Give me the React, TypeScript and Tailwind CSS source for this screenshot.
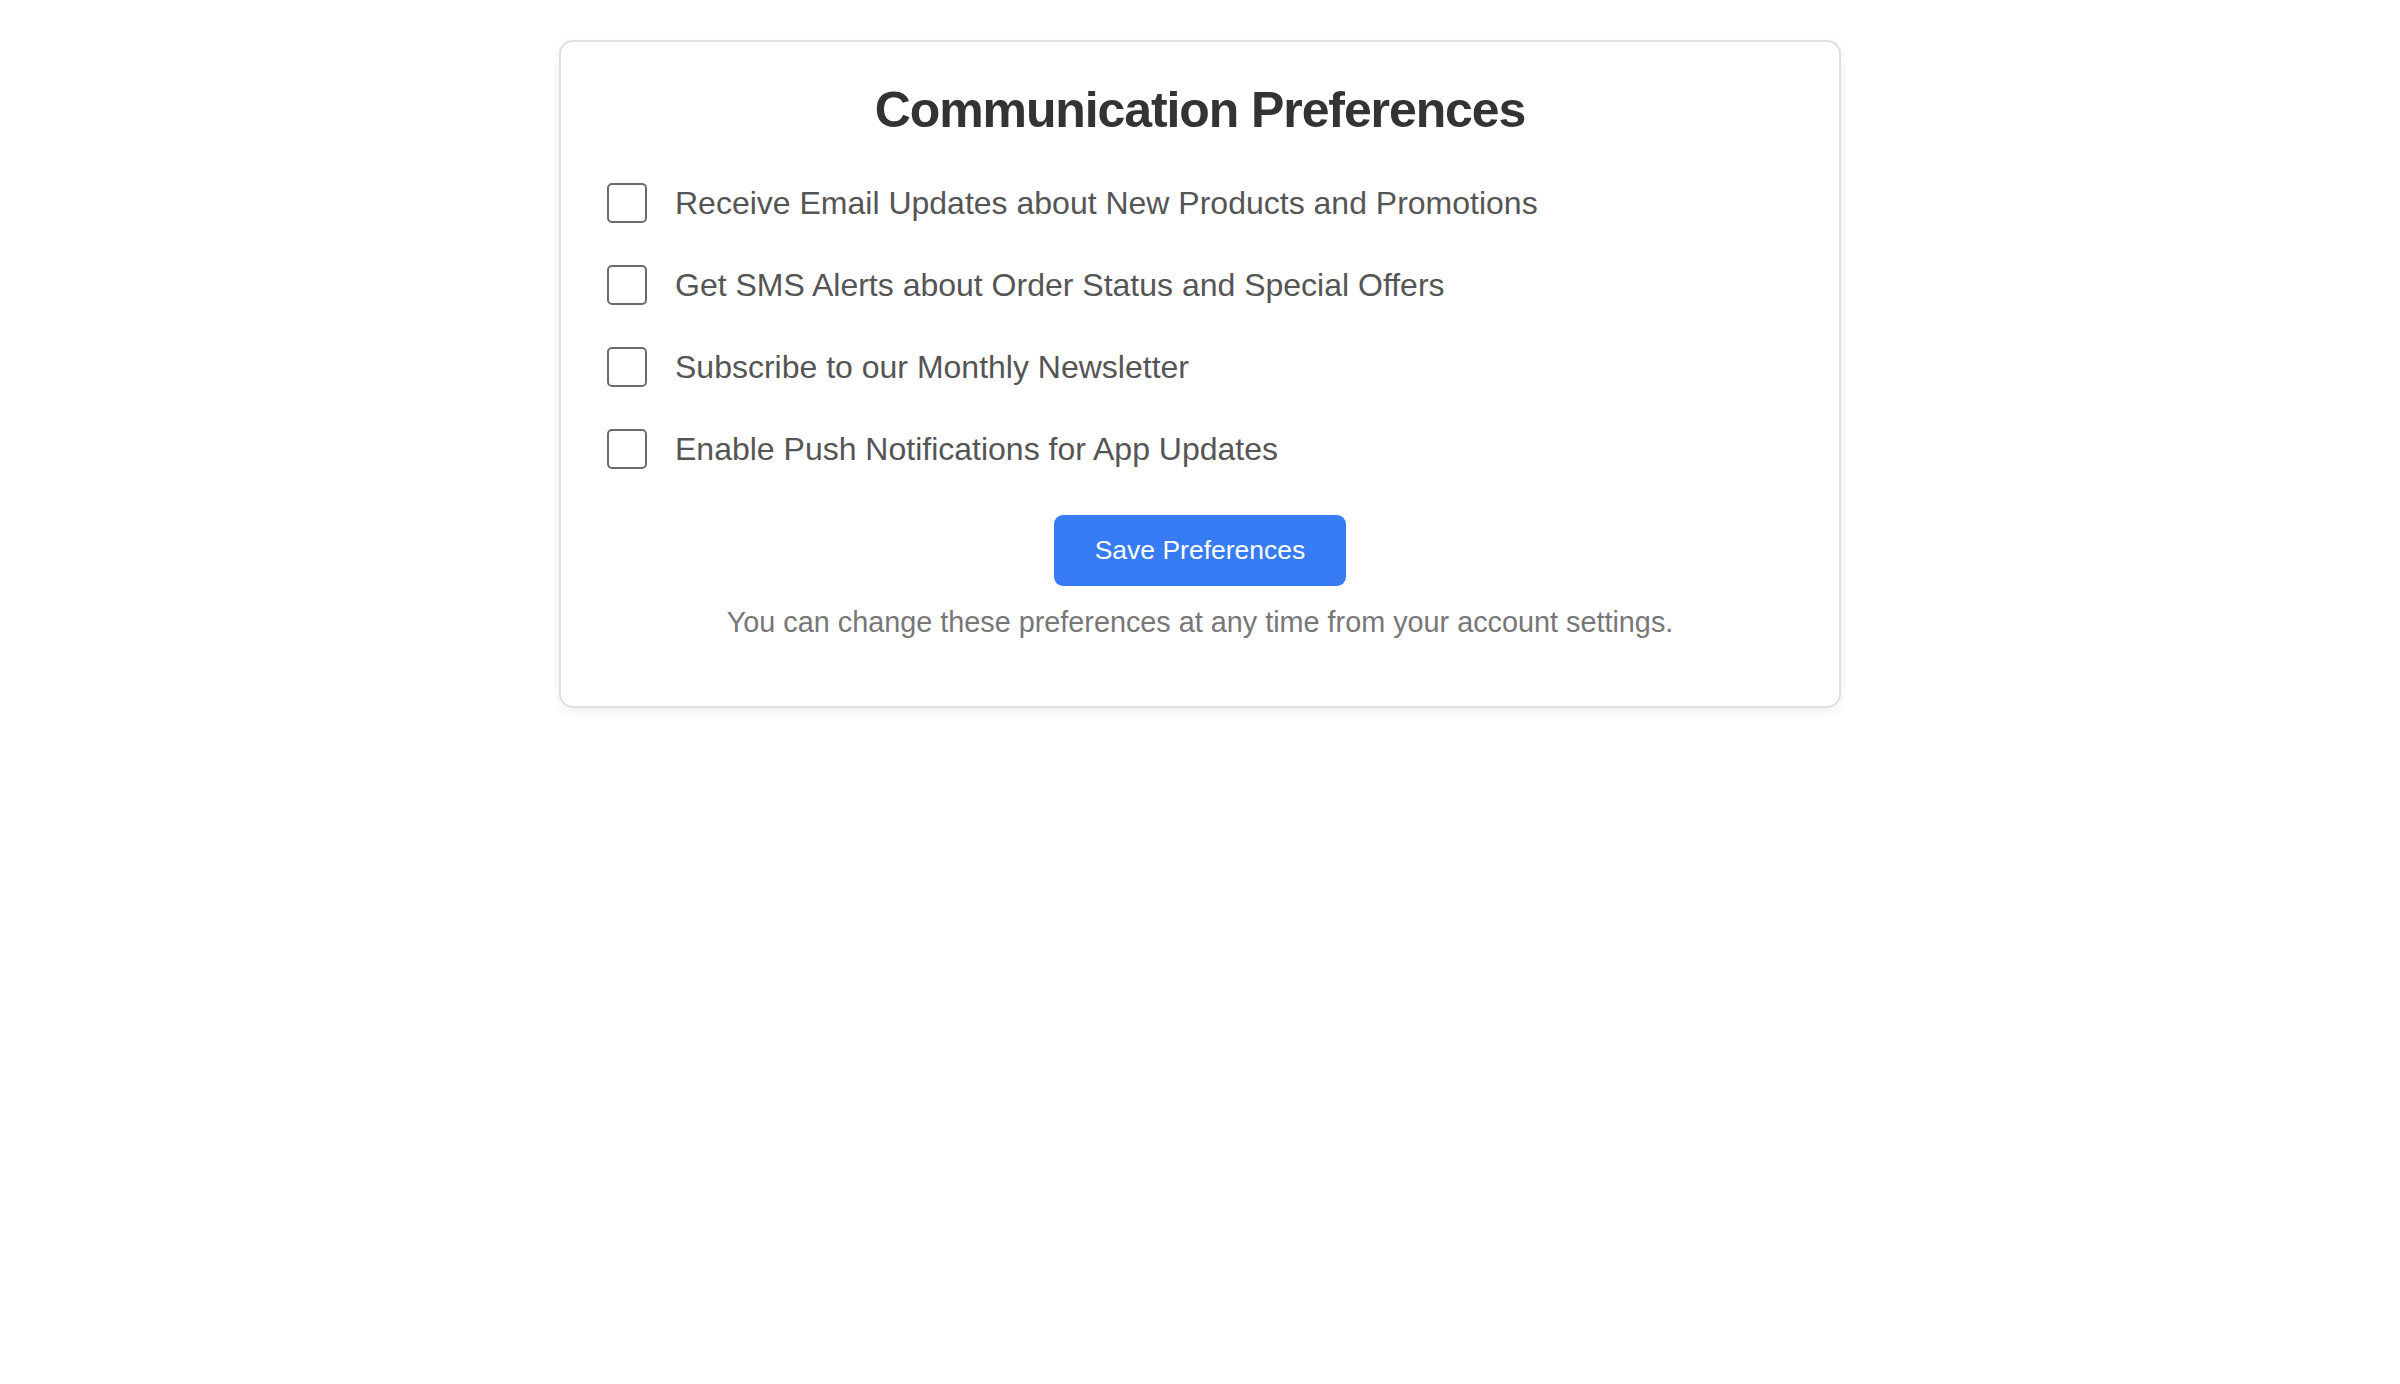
import { useState } from "react";

const options = [
  { id: "email", label: "Receive Email Updates about New Products and Promotions" },
  { id: "sms", label: "Get SMS Alerts about Order Status and Special Offers" },
  { id: "newsletter", label: "Subscribe to our Monthly Newsletter" },
  { id: "push", label: "Enable Push Notifications for App Updates" },
];

export default function App() {
  const [checked, setChecked] = useState<Record<string, boolean>>({});

  const toggle = (id: string) => {
    setChecked((prev) => ({ ...prev, [id]: !prev[id] }));
  };

  return (
    <div className="min-h-screen bg-white font-['Liberation_Sans',Arial,sans-serif]">
      <div className="flex justify-center pt-[40px]">
        {/* Card */}
        <div className="w-[1282px] rounded-[14px] border-2 border-[#e0e0e0] bg-white px-[46px] pt-[38px] pb-[68px] shadow-[0_4px_12px_rgba(0,0,0,0.06)]">
          <h2 className="text-center text-[50px] leading-[60px] font-bold tracking-[-1.1px] text-[#333333]">
            Communication Preferences
          </h2>

          {/* Options */}
          <div className="mt-[43px] flex flex-col gap-[42px]">
            {options.map((opt) => (
              <label key={opt.id} className="flex h-[40px] cursor-pointer items-center gap-[28px]">
                <span
                  onClick={() => toggle(opt.id)}
                  className={
                    checked[opt.id]
                      ? "h-[40px] w-[40px] shrink-0 rounded-[5px] border-2 border-[#3b7cf5] bg-[#3b7cf5]"
                      : "h-[40px] w-[40px] shrink-0 rounded-[5px] border-2 border-[#6b6b6b] bg-white"
                  }
                />
                <span className="text-[32px] leading-[36px] text-[#555555]">{opt.label}</span>
              </label>
            ))}
          </div>

          <div className="mt-[46px] flex justify-center">
            <button className="h-[71px] w-[292px] rounded-[9px] bg-[#377bf5] text-[26.5px] text-white">
              Save Preferences
            </button>
          </div>

          <p className="mt-[21px] text-center text-[28.8px] leading-[31px] text-[#777777]">
            You can change these preferences at any time from your account settings.
          </p>
        </div>
      </div>
    </div>
  );
}
